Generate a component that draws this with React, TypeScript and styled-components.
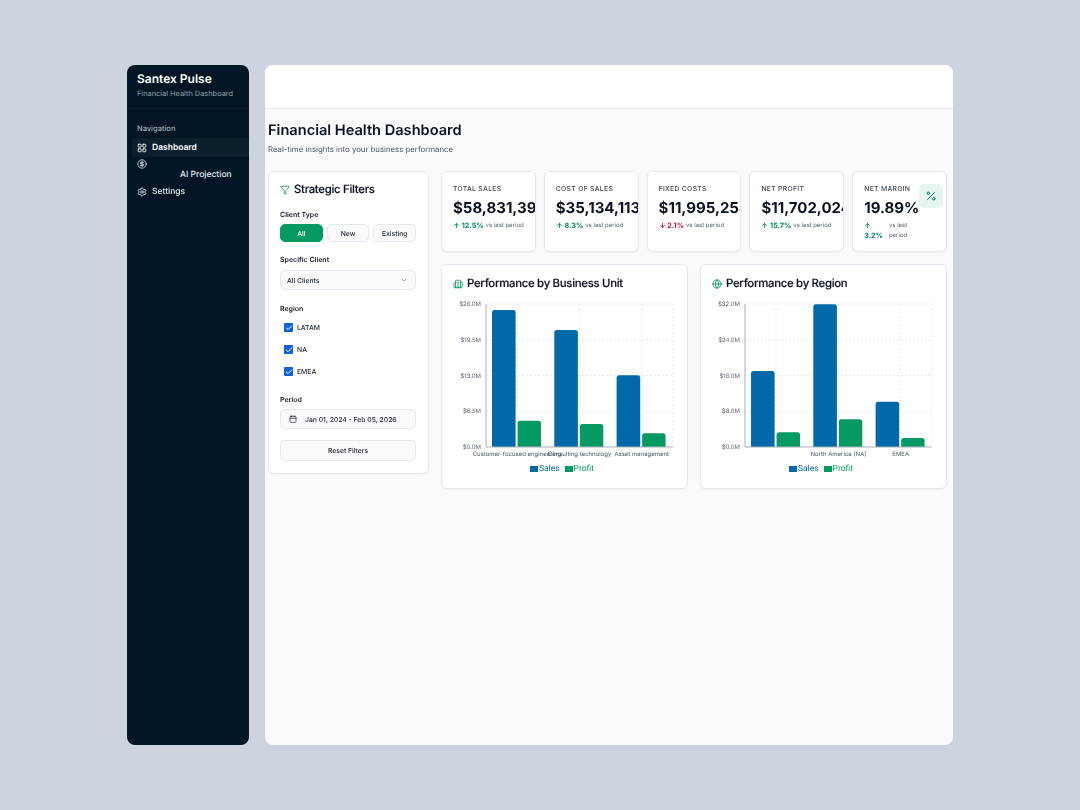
import React from "react";
import styled, { createGlobalStyle } from "styled-components";
import {
  LayoutGrid,
  CircleDollarSign,
  Settings,
  Funnel,
  Building2,
  Globe,
  Percent,
  Calendar,
  ChevronDown,
  ArrowUp,
  ArrowDown,
  Check,
} from "lucide-react";

const Global = createGlobalStyle`
  html, body { margin: 0; padding: 0; background: #cdd3df; }
  body { font-family: Inter, "Liberation Sans", sans-serif; color: #0b1220; text-rendering: geometricPrecision; }
  * { box-sizing: border-box; }
`;

const Page = styled.div`
  width: 1080px;
  height: 810px;
  padding: 65px 127px;
  display: flex;
  gap: 16px;
  overflow: hidden;
  filter: blur(0.3px);
`;

const Sidebar = styled.aside`
  width: 122px;
  height: 680px;
  background: #001624;
  border-radius: 8px;
  color: #fff;
  flex: none;
`;

const Brand = styled.div`
  height: 44px;
  padding: 6px 10px 0;
  border-bottom: 1px solid #0a1f2d;
`;

const BrandName = styled.div`
  font-size: 12px;
  font-weight: 600;
  line-height: 15px;
`;

const BrandSub = styled.div`
  font-size: 7.4px;
  line-height: 10px;
  margin-top: 3px;
  color: #94a3b0;
`;

const Nav = styled.nav`
  padding: 15px 0 0 5px;
`;

const NavTitle = styled.div`
  font-size: 7.5px;
  font-weight: 500;
  line-height: 10px;
  color: #a3afba;
  padding-left: 5px;
  margin-bottom: 4px;
`;

const NavItem = styled.div<{ $active?: boolean }>`
  height: 19px;
  display: flex;
  align-items: center;
  gap: 5px;
  padding-left: 5px;
  font-size: 8.5px;
  font-weight: ${(p) => (p.$active ? 600 : 500)};
  color: ${(p) => (p.$active ? "#fff" : "#e2e8ee")};
  background: ${(p) => (p.$active ? "#0b1f2d" : "transparent")};
  border-radius: 3px 0 0 3px;
`;

const NavWrapped = styled.div`
  height: 25px;
  padding: 2px 0 0 5px;
  display: flex;
  font-size: 8.5px;
  font-weight: 500;
  color: #e2e8ee;
  & > span {
    padding: 10px 0 0 33px;
    line-height: 12px;
  }
`;

const Main = styled.main`
  width: 688px;
  height: 680px;
  background: #f8fafc;
  border-radius: 8px;
  overflow: hidden;
  flex: none;
`;

const TopBar = styled.header`
  height: 44px;
  background: #fff;
  border-bottom: 1px solid #e2e8f0;
`;

const Content = styled.div`
  padding: 11px 6px 0 3px;
`;

const Title = styled.h1`
  margin: 0;
  font-size: 14.6px;
  line-height: 20px;
  font-weight: 600;
  color: #0b1220;
`;

const Subtitle = styled.p`
  margin: 4px 0 0;
  font-size: 7.8px;
  line-height: 11px;
  color: #4b5563;
`;

const Columns = styled.div`
  display: flex;
  gap: 12px;
  margin-top: 16px;
  align-items: flex-start;
`;

const Card = styled.section`
  background: #fff;
  border: 1px solid #e5e9ef;
  border-radius: 6px;
  box-shadow: 0 1px 2px rgba(15, 23, 42, 0.04);
`;

const FilterCard = styled(Card)`
  width: 161px;
  height: 303px;
  padding: 10px 12px 0 11px;
  flex: none;
`;

const CardTitle = styled.h2`
  margin: 0;
  display: flex;
  align-items: center;
  gap: 4px;
  font-size: 11.4px;
  line-height: 15px;
  font-weight: 500;
  letter-spacing: -0.3px;
  color: #0b1220;
  -webkit-text-stroke: 0.15px #0b1220;
  & svg {
    color: #059669;
    flex: none;
  }
`;

const FieldLabel = styled.div<{ $top: number }>`
  font-size: 7px;
  line-height: 10px;
  font-weight: 600;
  color: #111827;
  margin-top: ${(p) => p.$top}px;
`;

const Segments = styled.div`
  display: flex;
  gap: 4px;
  margin-top: 4px;
`;

const Segment = styled.div<{ $on?: boolean }>`
  flex: 1;
  height: 18px;
  display: flex;
  align-items: center;
  justify-content: center;
  font-size: 6.8px;
  font-weight: 500;
  border-radius: 5px;
  color: ${(p) => (p.$on ? "#fff" : "#1e2633")};
  background: ${(p) => (p.$on ? "#059a62" : "#f8fafc")};
  border: 1px solid ${(p) => (p.$on ? "#059a62" : "#e5e9ef")};
`;

const Field = styled.div<{ $top?: number; $h?: number; $center?: boolean }>`
  height: ${(p) => p.$h ?? 20}px;
  margin-top: ${(p) => p.$top ?? 5}px;
  display: flex;
  align-items: center;
  justify-content: ${(p) => (p.$center ? "center" : "flex-start")};
  font-size: 6.8px;
  font-weight: 500;
  color: #1e2633;
  background: #f8fafc;
  border: 1px solid #e5e9ef;
  border-radius: 5px;
`;

const SelectField = styled(Field)`
  justify-content: space-between;
  padding: 0 7px 0 6px;
  & svg {
    color: #6b7280;
  }
`;

const DateField = styled(Field)`
  padding-left: 8px;
  gap: 8px;
  & svg {
    color: #1e2633;
  }
`;

const CheckRow = styled.div<{ $first?: boolean }>`
  height: 9px;
  margin-top: ${(p) => (p.$first ? 9 : 13)}px;
  padding-left: 4px;
  display: flex;
  align-items: center;
  gap: 4px;
  font-size: 6.8px;
  font-weight: 500;
  color: #1e2633;
`;

const CheckBox = styled.span`
  width: 9px;
  height: 9px;
  background: #0f62d6;
  border-radius: 1px;
  display: flex;
  align-items: center;
  justify-content: center;
  color: #fff;
`;

const RightCol = styled.div`
  flex: 1;
  min-width: 0;
`;

const KpiRow = styled.div`
  display: grid;
  grid-template-columns: repeat(5, 1fr);
  gap: 8px;
`;

const KpiCard = styled(Card)`
  position: relative;
  height: 81px;
  padding: 12px 0 0 11px;
  overflow: hidden;
`;

const KpiBody = styled.div<{ $narrow?: boolean }>`
  width: ${(p) => (p.$narrow ? "55px" : "auto")};
`;

const KpiLabel = styled.div`
  font-size: 6.8px;
  line-height: 10px;
  font-weight: 500;
  letter-spacing: 0.3px;
  color: #3f4956;
`;

const KpiValue = styled.div`
  margin-top: 4px;
  font-size: 15px;
  line-height: 20px;
  font-weight: 700;
  color: #0b1220;
  white-space: nowrap;
`;

const KpiChange = styled.div`
  margin-top: 3px;
  display: flex;
  align-items: center;
  gap: 2px;
  font-size: 6px;
  line-height: 10px;
  color: #5b6472;
  white-space: nowrap;
`;

const KpiChangeWrap = styled(KpiChange)`
  white-space: normal;
  gap: 3px;
`;

const Delta = styled.span<{ $down?: boolean }>`
  color: ${(p) => (p.$down ? "#be123c" : "#05875a")};
  font-size: 7.2px;
  font-weight: 700;
  & svg {
    vertical-align: -1px;
  }
`;

const Badge = styled.div`
  position: absolute;
  right: 3px;
  top: 12px;
  width: 24px;
  height: 24px;
  border-radius: 5px;
  background: #e6f5ef;
  color: #05875a;
  display: flex;
  align-items: center;
  justify-content: center;
`;

const Charts = styled.div`
  display: grid;
  grid-template-columns: 1fr 1fr;
  gap: 12px;
  margin-top: 12px;
`;

const ChartCard = styled(Card)`
  height: 225px;
  padding: 11px 11px 0;
`;

const ChartFrame = styled.svg`
  display: block;
  width: 223px;
  height: 160px;
  margin-top: 7px;
  overflow: visible;
  font-family: Inter, "Liberation Sans", sans-serif;
`;

const Legend = styled.div`
  display: flex;
  justify-content: center;
  gap: 5px;
  height: 14px;
  align-items: center;
  padding-right: 5px;
  margin-top: 4px;
`;

const LegendItem = styled.span<{ $color: string }>`
  display: flex;
  align-items: center;
  gap: 1px;
  font-family: Roboto, Inter, sans-serif;
  font-size: 8.5px;
  color: ${(p) => p.$color};
  &::before {
    content: "";
    width: 8px;
    height: 5.5px;
    background: ${(p) => p.$color};
  }
`;

const SALES = "#0369a8";
const PROFIT = "#059a62";

interface ChartProps {
  ticks: string[];
  sales: number[];
  profit: number[];
  labels: { text: string; x: number }[];
}

const Y0 = 149;
const Y1 = 6;
const PL = 33;
const PR = 219.7;

function topBar(x: number, y: number, w: number) {
  const r = 2.5;
  return `M${x} ${Y0}V${y + r}Q${x} ${y} ${x + r} ${y}H${x + w - r}Q${x + w} ${y} ${x + w} ${y + r}V${Y0}Z`;
}

function BarChart({ ticks, sales, profit, labels }: ChartProps) {
  const xs = [39, 101.3, 163.6];
  const grid = [64, 126.5, 188.7];
  return (
    <ChartFrame viewBox="0 0 223 160">
      {ticks.map((t, i) => {
        const y = Y1 + ((Y0 - Y1) * i) / 4;
        return (
          <g key={t}>
            {i < 4 && <line x1={PL} x2={PR} y1={y} y2={y} stroke="#dfe3e8" strokeWidth="0.8" strokeDasharray="2 2" />}
            <text x={PL - 5} y={y + 2.2} fontSize="6" fill="#5b6472" textAnchor="end">
              {t}
            </text>
          </g>
        );
      })}
      {grid.map((x) => (
        <line key={x} x1={x} x2={x} y1={Y1} y2={Y0} stroke="#dfe3e8" strokeWidth="0.8" strokeDasharray="2 2" />
      ))}
      <line x1={PR} x2={PR} y1={Y1} y2={Y0} stroke="#dfe3e8" strokeWidth="0.8" strokeDasharray="2 2" />
      {xs.map((x, i) => (
        <g key={x}>
          <path d={topBar(x, sales[i], 23.6)} fill={SALES} />
          <path d={topBar(x + 25.6, profit[i], 23.4)} fill={PROFIT} />
        </g>
      ))}
      <line x1={PL} x2={PL} y1={Y1} y2={Y0} stroke="#a8b0ba" strokeWidth="1" />
      <line x1={PL} x2={PR} y1={Y0} y2={Y0} stroke="#a8b0ba" strokeWidth="1" />
      {labels.map((l) => (
        <text key={l.text} x={l.x} y={157.5} fontSize="6" fill="#4b5563" textAnchor="middle">
          {l.text}
        </text>
      ))}
    </ChartFrame>
  );
}

const kpis = [
  { label: "TOTAL SALES", value: "$58,831,392", delta: "12.5%" },
  { label: "COST OF SALES", value: "$35,134,113", delta: "8.3%" },
  { label: "FIXED COSTS", value: "$11,995,254", delta: "2.1%", down: true },
  { label: "NET PROFIT", value: "$11,702,024", delta: "15.7%" },
];

export default function App() {
  return (
    <>
      <Global />
      <Page>
        <Sidebar>
          <Brand>
            <BrandName>Santex Pulse</BrandName>
            <BrandSub>Financial Health Dashboard</BrandSub>
          </Brand>
          <Nav>
            <NavTitle>Navigation</NavTitle>
            <NavItem $active>
              <LayoutGrid size={10} />
              Dashboard
            </NavItem>
            <NavWrapped>
              <CircleDollarSign size={10} />
              <span>AI Projection</span>
            </NavWrapped>
            <NavItem>
              <Settings size={10} />
              Settings
            </NavItem>
          </Nav>
        </Sidebar>
        <Main>
          <TopBar />
          <Content>
            <Title>Financial Health Dashboard</Title>
            <Subtitle>Real-time insights into your business performance</Subtitle>
            <Columns>
              <FilterCard>
                <CardTitle>
                  <Funnel size={10} />
                  Strategic Filters
                </CardTitle>
                <FieldLabel $top={13}>Client Type</FieldLabel>
                <Segments>
                  <Segment $on>All</Segment>
                  <Segment>New</Segment>
                  <Segment>Existing</Segment>
                </Segments>
                <FieldLabel $top={13}>Specific Client</FieldLabel>
                <SelectField>
                  All Clients
                  <ChevronDown size={8} />
                </SelectField>
                <FieldLabel $top={14}>Region</FieldLabel>
                <CheckRow $first>
                  <CheckBox><Check size={8} strokeWidth={3} /></CheckBox>
                  LATAM
                </CheckRow>
                <CheckRow>
                  <CheckBox><Check size={8} strokeWidth={3} /></CheckBox>
                  NA
                </CheckRow>
                <CheckRow>
                  <CheckBox><Check size={8} strokeWidth={3} /></CheckBox>
                  EMEA
                </CheckRow>
                <FieldLabel $top={19}>Period</FieldLabel>
                <DateField $top={4}>
                  <Calendar size={8} />
                  Jan 01, 2024 - Feb 05, 2026
                </DateField>
                <Field $top={11} $h={21} $center>
                  Reset Filters
                </Field>
              </FilterCard>
              <RightCol>
                <KpiRow>
                  {kpis.map((k) => (
                    <KpiCard key={k.label}>
                      <KpiBody>
                        <KpiLabel>{k.label}</KpiLabel>
                        <KpiValue>{k.value}</KpiValue>
                        <KpiChange>
                          <Delta $down={k.down}>
                            {k.down ? <ArrowDown size={7} strokeWidth={3} /> : <ArrowUp size={7} strokeWidth={3} />} {k.delta}
                          </Delta>
                          vs last period
                        </KpiChange>
                      </KpiBody>
                    </KpiCard>
                  ))}
                  <KpiCard>
                    <KpiBody $narrow>
                      <KpiLabel>NET MARGIN</KpiLabel>
                      <KpiValue>19.89%</KpiValue>
                      <KpiChangeWrap>
                        <Delta>
                          <ArrowUp size={7} strokeWidth={3} /> 3.2%
                        </Delta>
                        <span>vs last period</span>
                      </KpiChangeWrap>
                    </KpiBody>
                    <Badge>
                      <Percent size={12} />
                    </Badge>
                  </KpiCard>
                </KpiRow>
                <Charts>
                  <ChartCard>
                    <CardTitle>
                      <Building2 size={10} />
                      Performance by Business Unit
                    </CardTitle>
                    <BarChart
                      ticks={["$26.0M", "$19.5M", "$13.0M", "$6.5M", "$0.0M"]}
                      sales={[12, 32, 77.3]}
                      profit={[122.7, 126, 135.3]}
                      labels={[
                        { text: "Customer-focused engineering", x: 64 },
                        { text: "Consulting technology", x: 126.5 },
                        { text: "Asset management", x: 188.7 },
                      ]}
                    />
                    <Legend>
                      <LegendItem $color={SALES}>Sales</LegendItem>
                      <LegendItem $color={PROFIT}>Profit</LegendItem>
                    </Legend>
                  </ChartCard>
                  <ChartCard>
                    <CardTitle>
                      <Globe size={10} />
                      Performance by Region
                    </CardTitle>
                    <BarChart
                      ticks={["$32.0M", "$24.0M", "$16.0M", "$8.0M", "$0.0M"]}
                      sales={[73, 6.3, 103.7]}
                      profit={[134.3, 121.3, 140]}
                      labels={[
                        { text: "North America (NA)", x: 126.5 },
                        { text: "EMEA", x: 188.7 },
                      ]}
                    />
                    <Legend>
                      <LegendItem $color={SALES}>Sales</LegendItem>
                      <LegendItem $color={PROFIT}>Profit</LegendItem>
                    </Legend>
                  </ChartCard>
                </Charts>
              </RightCol>
            </Columns>
          </Content>
        </Main>
      </Page>
    </>
  );
}
